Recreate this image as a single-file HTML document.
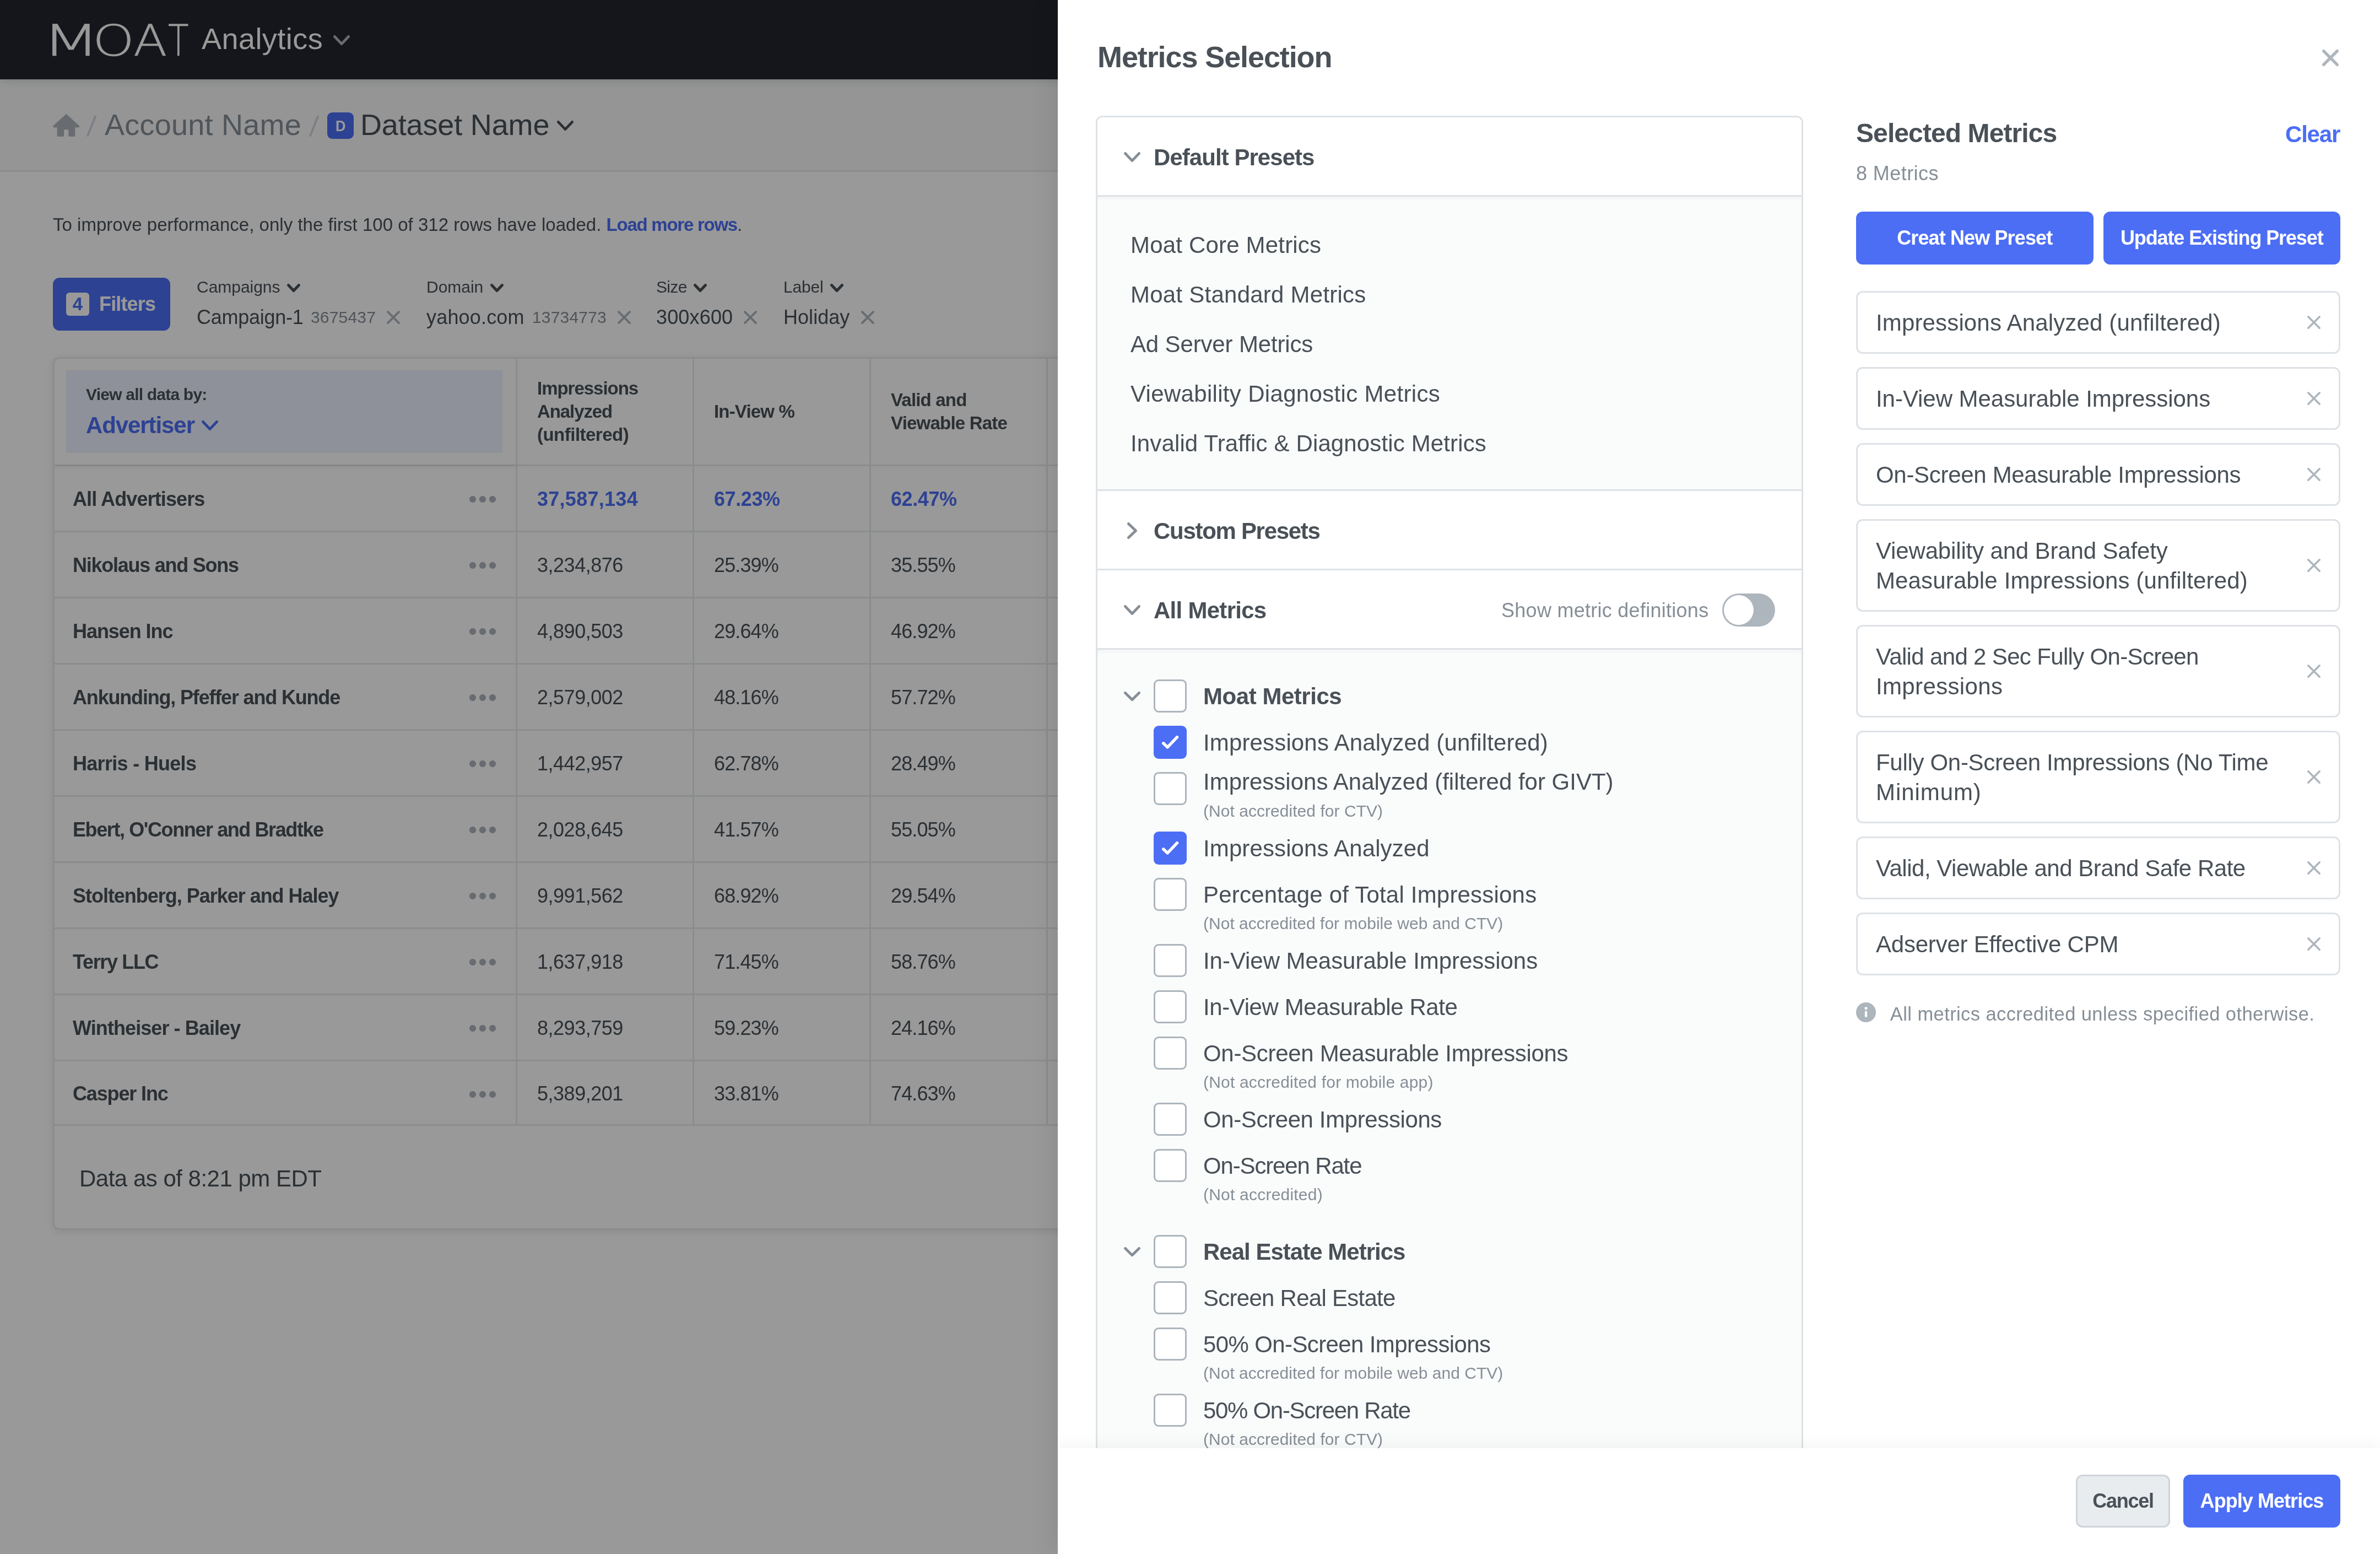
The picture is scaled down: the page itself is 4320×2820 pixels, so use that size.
<!DOCTYPE html>
<html lang="en">
<head>
<meta charset="utf-8">
<title>Moat Analytics – Metrics Selection</title>
<style>
*{box-sizing:border-box;margin:0;padding:0}
html,body{width:4320px;height:2820px;overflow:hidden;background:#fff}
body{font-family:"Liberation Sans",Arial,sans-serif;color:#495057;-webkit-font-smoothing:antialiased}
.app{position:relative;width:1440px;height:940px;overflow:hidden;zoom:3;background:#fff;will-change:transform}
svg{display:block;overflow:visible}
b,.b{font-weight:700}
/* ---------- top bar ---------- */
.top{position:absolute;z-index:1;left:0;top:0;width:1440px;height:48px;background:#23252d;color:#fff;box-shadow:0 1px 5px rgba(0,0,0,.14)}
.logo{position:absolute;left:0;top:0;height:48px;line-height:48px;font-family:"DejaVu Sans","Liberation Sans",sans-serif;font-weight:200;font-size:26.2px;color:#fff}
.logo span{position:absolute;top:.67px;-webkit-text-stroke:.22px #fff;transform-origin:0 50%}
.prod{position:absolute;left:122px;top:0;height:48px;line-height:47px;font-size:18px;color:#fff}
.top .chev{position:absolute;left:201.8px;top:21.2px}
/* ---------- breadcrumb ---------- */
.crumbs{position:absolute;left:0;top:48px;width:1440px;height:56px;background:#f8f9fa;border-bottom:1px solid #e6e9ec;font-size:18px;line-height:55px;color:#868e96;white-space:nowrap}
.crumbs .home{position:absolute;left:31.5px;top:20.95px}
.crumbs .sl{position:absolute;top:1px;color:#ced4da;font-size:17px;transform:skewX(-7deg)}
.crumbs .acc{position:absolute;left:63.3px;top:0}
.crumbs .dbadge{position:absolute;left:198px;top:20px;width:16px;height:16px;border-radius:3px;background:#4c6ef5;color:#fff;font-size:9.5px;font-weight:700;line-height:16px;text-align:center}
.crumbs .dbadge span{display:inline-block;transform:scaleX(.9)}
.crumbs .ds{position:absolute;left:218px;top:0;color:#495057}
.crumbs .chev{position:absolute;left:337px;top:25px}
/* ---------- notice + filters ---------- */
.notice{position:absolute;left:32px;top:128px;font-size:11px;line-height:16px;white-space:nowrap;color:#495057}
.notice a{color:#4c6ef5;font-weight:700;text-decoration:none}
.fbtn{position:absolute;left:32px;top:168px;width:71px;height:32px;border-radius:4px;background:#4c6ef5;color:#fff;font-size:12px;font-weight:700;line-height:32px}
.fbtn i{position:absolute;left:8px;top:9px;width:14px;height:14px;border-radius:2px;background:#fff;color:#4c6ef5;font-style:normal;font-size:11px;line-height:14px;text-align:center}
.fbtn>span{position:absolute;left:28px;top:0}
.flt{position:absolute;top:166px;height:36px;white-space:nowrap}
.flt .lab{position:absolute;left:0;top:0.5px;font-size:10px;line-height:14px;color:#495057}
.flt .lab svg{position:absolute;top:5px}
.flt .val{position:absolute;left:0;top:17px;font-size:12px;line-height:18px;color:#495057}
.flt .id{position:absolute;top:18px;font-size:10px;line-height:16px;color:#868e96}
.flt .x{position:absolute;top:22px}
/* ---------- table ---------- */
.tbl{z-index:0;position:absolute;left:32px;top:216px;width:1376px;height:528px;border:1px solid #e6e9ec;border-radius:4px;background:#fff;box-shadow:0 1px 5px rgba(0,0,0,.09);overflow:hidden}
.tr{display:flex;height:40px;border-bottom:1px solid #e6e9ec}
.tr.h{height:65px}
.tr.last{height:39px}
.tr.last .td{line-height:39px}
.td{flex:0 0 107px;border-right:1px solid #e6e9ec;padding-left:12px;font-size:12px;line-height:40px;white-space:nowrap;color:#495057}
.td.f{flex:0 0 280px;padding-left:11px;font-weight:700;position:relative}
.tr.h .td.f{z-index:1;box-shadow:0 2px 3px rgba(0,0,0,.05)}
.tr.h .td{font-size:11px;font-weight:700;line-height:14px;display:flex;align-items:center;white-space:normal}
.tr.tot .td{color:#4c6ef5;font-weight:700}
.tr.tot .td.f{color:#495057}
.dots{position:absolute;left:251px;top:18px;width:16px;height:4px;background:radial-gradient(circle at 2px 2px,#adb5bd 1.9px,transparent 2.1px) 0 0/6px 4px repeat-x}
.vsel{position:absolute;left:7px;top:7px;width:264px;height:50px;background:#edf2ff}
.vsel .l1{position:absolute;left:12px;top:7.5px;font-size:10px;line-height:14px;font-weight:700;color:#495057;white-space:nowrap}
.vsel .l2{position:absolute;left:12px;top:23.4px;font-size:14px;line-height:20px;font-weight:700;color:#4c6ef5;white-space:nowrap}
.vsel svg{position:absolute;left:82px;top:30.3px}
.tfoot{height:62px;padding-left:15px;font-size:14px;line-height:64px;color:#495057}
/* ---------- scrim ---------- */
.scrim{z-index:5;position:absolute;left:0;top:0;width:1440px;height:940px;background:rgba(0,0,0,.4)}
/* ---------- panel ---------- */
.panel{z-index:6;position:absolute;left:640px;top:0;width:800px;height:940px;background:#fff;box-shadow:-4px 0 14px rgba(0,0,0,.08);overflow:hidden}
.ptitle{position:absolute;left:24px;top:21.4px;font-size:18px;line-height:26px;font-weight:700;color:#495057;white-space:nowrap}
.pclose{position:absolute;left:765px;top:30px}
.card{position:absolute;left:24px;top:71px;width:426px;height:900px;background:#fff;border-radius:3px;box-shadow:0 0 0 1px #dee2e6}
.sec{position:relative;height:48px;border-bottom:1px solid #dee2e6;font-size:14px;font-weight:700;line-height:47px;color:#495057;background:#fff;white-space:nowrap}
.sec:first-child{border-radius:3px 3px 0 0}
.sec .t{position:absolute;left:34px;top:.8px}
.sec svg{position:absolute;left:16px;top:21px}
.presets{box-shadow:inset 0 2px 3px -1px rgba(0,0,0,.035);height:178px;padding:14.4px 0 0 20px;background:#fafbfb;border-bottom:1px solid #dee2e6;font-size:14px;line-height:30px;color:#495057;white-space:nowrap}
.smd{position:absolute;right:56.2px;top:.6px;font-size:12px;font-weight:400;color:#868e96}
.tog{position:absolute;left:378px;top:14px;width:32px;height:20px;border-radius:10px;background:#adb5bd}
.tog::after{content:"";position:absolute;left:1px;top:1px;width:18px;height:18px;border-radius:50%;background:#fff}
.mlist{position:relative;height:520px;background:#fafbfb;box-shadow:inset 0 2px 3px -1px rgba(0,0,0,.035)}
.mi{position:absolute;left:0;width:426px;height:20px;white-space:nowrap}
.mi .cb{position:absolute;left:34px;top:0;width:20px;height:20px;border:1px solid #adb5bd;border-radius:3px;background:#fff}
.mi .cb.on{border:0;background:#4c6ef5}
.mi .cb.on svg{position:absolute;left:5px;top:6px}
.mi .n{position:absolute;left:64px;top:.4px;font-size:14px;line-height:20px;color:#495057}
.mi .s{position:absolute;left:64px;top:20.5px;font-size:10px;line-height:14px;color:#868e96}
.mi.g .n{font-weight:700}
.mi .gc{position:absolute;left:16px;top:7.4px}
/* right column */
.rc{position:absolute;left:483px;top:0;width:293px}
.rtitle{position:absolute;left:0;top:68.7px;font-size:16px;line-height:24px;font-weight:700;color:#495057;white-space:nowrap}
.rclear{position:absolute;right:.3px;top:70.2px;font-size:14px;line-height:22px;font-weight:700;color:#4c6ef5}
.rcount{position:absolute;left:0;top:96px;font-size:12px;line-height:18px;color:#868e96}
.pbtn{position:absolute;top:128px;height:32px;border-radius:4px;background:#4c6ef5;color:#fff;font-size:12px;font-weight:700;line-height:32px;text-align:center;white-space:nowrap}
.sm{position:absolute;left:0;width:293px;border:1px solid #dee2e6;border-radius:4px;background:#fff;font-size:14px;line-height:18px;color:#495057;padding:9.4px 0 0 11px;white-space:nowrap}
.sm svg{position:absolute;left:272px;top:50%;margin-top:-4px}
.rnote{position:absolute;left:0;top:604px;width:293px;height:16px;font-size:11.5px;line-height:16px;color:#868e96;white-space:nowrap}
.rnote svg{position:absolute;left:0;top:2.4px}
.rnote>span{position:absolute;left:20.6px;top:1.4px}
/* footer */
.pfoot{position:absolute;left:0;top:876px;width:800px;height:64px;background:#fff;box-shadow:0 -3px 8px rgba(0,0,0,.04)}
.btn{position:absolute;top:16px;height:32px;border-radius:4px;font-size:12px;font-weight:700;line-height:32px;text-align:center;white-space:nowrap}
.btn.c{left:616px;width:57px;background:#e9ecef;border:1px solid #ced4da;color:#495057;line-height:30px}
.btn.a{left:681px;width:95px;background:#4c6ef5;color:#fff}
</style>
</head>
<body>
<div class="app">
<header class="top"><span class="logo"><span style="left:25.3px;transform:scaleX(1.56)">M</span><span style="left:55.9px;transform:scaleX(1.23)">O</span><span style="left:80.6px;transform:scaleX(1.144)">A</span><span style="left:101.6px;transform:scaleX(.78)">T</span></span><span class="prod"><span style="letter-spacing:0.148px">Analytics</span></span><svg class="chev" width="10" height="6" viewBox="0 0 10 6" fill="none" stroke="#adb5bd" stroke-width="1.6" stroke-linecap="round" stroke-linejoin="round"><path d="M0.80 0.80 L5.0 5.20 L9.20 0.80"/></svg></header>
<nav class="crumbs"><svg class="home" width="16.8" height="13.6" viewBox="2 3.2 20 17" preserveAspectRatio="none"><path fill="#adb5bd" stroke="#adb5bd" stroke-width=".8" stroke-linejoin="round" d="M12 3.6L21.1 12.3V12.9H18V19.8H14.06V14.56H10V19.8H5.8V12.9H2.9V12.3Z"/></svg><span class="sl" style="left:53px">/</span><span class="acc"><span style="letter-spacing:0.081px">Account Name</span></span><span class="sl" style="left:187.8px">/</span><span class="dbadge"><span>D</span></span><span class="ds"><span style="letter-spacing:-0.052px">Dataset Name</span></span><svg class="chev" width="10" height="6" viewBox="0 0 10 6" fill="none" stroke="#495057" stroke-width="1.55" stroke-linecap="round" stroke-linejoin="round"><path d="M0.78 0.78 L5.0 5.22 L9.22 0.78"/></svg></nav>
<p class="notice"><span style="letter-spacing:0.006px">To improve performance, only the first 100 of 312 rows have loaded. </span><a><span style="letter-spacing:-0.417px">Load more rows</span></a>.</p>
<div class="fbtn"><i>4</i><span><span style="letter-spacing:-0.281px">Filters</span></span></div>
<div class="flt" style="left:119px"><span class="lab"><span style="letter-spacing:-0.009px">Campaigns</span><svg class="c" style="left:54.8px" width="8" height="5" viewBox="0 0 8 5" fill="none" stroke="#495057" stroke-width="1.7" stroke-linecap="round" stroke-linejoin="round"><path d="M0.85 0.85 L4.0 4.15 L7.15 0.85"/></svg></span><span class="val"><span style="letter-spacing:-0.089px">Campaign-1</span></span><span class="id" style="left:69px"><span style="letter-spacing:0.058px">3675437</span></span><svg class="x" style="left:115px" width="8" height="8" viewBox="0 0 8 8" fill="none" stroke="#adb5bd" stroke-width="1.3" stroke-linecap="round"><path d="M0.65 0.65 L7.35 7.35 M7.35 0.65 L0.65 7.35"/></svg></div><div class="flt" style="left:258px"><span class="lab"><span style="letter-spacing:-0.005px">Domain</span><svg class="c" style="left:38.699999999999996px" width="8" height="5" viewBox="0 0 8 5" fill="none" stroke="#495057" stroke-width="1.7" stroke-linecap="round" stroke-linejoin="round"><path d="M0.85 0.85 L4.0 4.15 L7.15 0.85"/></svg></span><span class="val"><span style="letter-spacing:0.059px">yahoo.com</span></span><span class="id" style="left:64px"><span style="letter-spacing:0.059px">13734773</span></span><svg class="x" style="left:115.5px" width="8" height="8" viewBox="0 0 8 8" fill="none" stroke="#adb5bd" stroke-width="1.3" stroke-linecap="round"><path d="M0.65 0.65 L7.35 7.35 M7.35 0.65 L0.65 7.35"/></svg></div><div class="flt" style="left:397px"><span class="lab"><span style="letter-spacing:-0.223px">Size</span><svg class="c" style="left:22.6px" width="8" height="5" viewBox="0 0 8 5" fill="none" stroke="#495057" stroke-width="1.7" stroke-linecap="round" stroke-linejoin="round"><path d="M0.85 0.85 L4.0 4.15 L7.15 0.85"/></svg></span><span class="val"><span style="letter-spacing:0.054px">300x600</span></span><svg class="x" style="left:53px" width="8" height="8" viewBox="0 0 8 8" fill="none" stroke="#adb5bd" stroke-width="1.3" stroke-linecap="round"><path d="M0.65 0.65 L7.35 7.35 M7.35 0.65 L0.65 7.35"/></svg></div><div class="flt" style="left:474px"><span class="lab"><span style="letter-spacing:-0.056px">Label</span><svg class="c" style="left:28.3px" width="8" height="5" viewBox="0 0 8 5" fill="none" stroke="#495057" stroke-width="1.7" stroke-linecap="round" stroke-linejoin="round"><path d="M0.85 0.85 L4.0 4.15 L7.15 0.85"/></svg></span><span class="val"><span style="letter-spacing:0.013px">Holiday</span></span><svg class="x" style="left:47px" width="8" height="8" viewBox="0 0 8 8" fill="none" stroke="#adb5bd" stroke-width="1.3" stroke-linecap="round"><path d="M0.65 0.65 L7.35 7.35 M7.35 0.65 L0.65 7.35"/></svg></div>
<section class="tbl">
<div class="tr h"><div class="td f"><div class="vsel"><span class="l1"><span style="letter-spacing:-0.262px">View all data by:</span></span><span class="l2"><span style="letter-spacing:-0.362px">Advertiser</span></span><svg class="c" width="10" height="6" viewBox="0 0 10 6" fill="none" stroke="#4c6ef5" stroke-width="1.6" stroke-linecap="round" stroke-linejoin="round"><path d="M0.80 0.80 L5.0 5.20 L9.20 0.80"/></svg></div></div><div class="td"><span><span style="letter-spacing:-0.342px">Impressions</span><br><span style="letter-spacing:-0.365px">Analyzed</span><br><span style="letter-spacing:-0.172px">(unfiltered)</span></span></div><div class="td"><span><span style="letter-spacing:-0.273px">In-View %</span></span></div><div class="td"><span><span style="letter-spacing:-0.274px">Valid and</span><br><span style="letter-spacing:-0.262px">Viewable Rate</span></span></div><div class="td"></div></div>
<div class="tr tot"><div class="td f"><span style="letter-spacing:-0.296px">All Advertisers</span><span class="dots"></span></div><div class="td"><span style="letter-spacing:0.092px">37,587,134</span></div><div class="td"><span style="letter-spacing:-0.135px">67.23%</span></div><div class="td"><span style="letter-spacing:-0.135px">62.47%</span></div><div class="td"></div></div>
<div class="tr"><div class="td f"><span style="letter-spacing:-0.419px">Nikolaus and Sons</span><span class="dots"></span></div><div class="td"><span style="letter-spacing:-0.161px">3,234,876</span></div><div class="td"><span style="letter-spacing:-0.294px">25.39%</span></div><div class="td"><span style="letter-spacing:-0.294px">35.55%</span></div><div class="td"></div></div>
<div class="tr"><div class="td f"><span style="letter-spacing:-0.356px">Hansen Inc</span><span class="dots"></span></div><div class="td"><span style="letter-spacing:-0.161px">4,890,503</span></div><div class="td"><span style="letter-spacing:-0.294px">29.64%</span></div><div class="td"><span style="letter-spacing:-0.294px">46.92%</span></div><div class="td"></div></div>
<div class="tr"><div class="td f"><span style="letter-spacing:-0.393px">Ankunding, Pfeffer and Kunde</span><span class="dots"></span></div><div class="td"><span style="letter-spacing:-0.161px">2,579,002</span></div><div class="td"><span style="letter-spacing:-0.294px">48.16%</span></div><div class="td"><span style="letter-spacing:-0.294px">57.72%</span></div><div class="td"></div></div>
<div class="tr"><div class="td f"><span style="letter-spacing:-0.235px">Harris - Huels</span><span class="dots"></span></div><div class="td"><span style="letter-spacing:-0.161px">1,442,957</span></div><div class="td"><span style="letter-spacing:-0.294px">62.78%</span></div><div class="td"><span style="letter-spacing:-0.294px">28.49%</span></div><div class="td"></div></div>
<div class="tr"><div class="td f"><span style="letter-spacing:-0.468px">Ebert, O'Conner and Bradtke</span><span class="dots"></span></div><div class="td"><span style="letter-spacing:-0.161px">2,028,645</span></div><div class="td"><span style="letter-spacing:-0.294px">41.57%</span></div><div class="td"><span style="letter-spacing:-0.294px">55.05%</span></div><div class="td"></div></div>
<div class="tr"><div class="td f"><span style="letter-spacing:-0.341px">Stoltenberg, Parker and Haley</span><span class="dots"></span></div><div class="td"><span style="letter-spacing:-0.161px">9,991,562</span></div><div class="td"><span style="letter-spacing:-0.294px">68.92%</span></div><div class="td"><span style="letter-spacing:-0.294px">29.54%</span></div><div class="td"></div></div>
<div class="tr"><div class="td f"><span style="letter-spacing:-0.448px">Terry LLC</span><span class="dots"></span></div><div class="td"><span style="letter-spacing:-0.161px">1,637,918</span></div><div class="td"><span style="letter-spacing:-0.294px">71.45%</span></div><div class="td"><span style="letter-spacing:-0.294px">58.76%</span></div><div class="td"></div></div>
<div class="tr"><div class="td f"><span style="letter-spacing:-0.306px">Wintheiser - Bailey</span><span class="dots"></span></div><div class="td"><span style="letter-spacing:-0.161px">8,293,759</span></div><div class="td"><span style="letter-spacing:-0.294px">59.23%</span></div><div class="td"><span style="letter-spacing:-0.294px">24.16%</span></div><div class="td"></div></div>
<div class="tr last"><div class="td f"><span style="letter-spacing:-0.381px">Casper Inc</span><span class="dots"></span></div><div class="td"><span style="letter-spacing:-0.161px">5,389,201</span></div><div class="td"><span style="letter-spacing:-0.294px">33.81%</span></div><div class="td"><span style="letter-spacing:-0.294px">74.63%</span></div><div class="td"></div></div>
<div class="tfoot"><span style="letter-spacing:-0.167px">Data as of 8:21 pm EDT</span></div>
</section>
<div class="scrim"></div>
<aside class="panel">
<h1 class="ptitle"><span style="letter-spacing:-0.369px">Metrics Selection</span></h1>
<svg class="pclose" width="10" height="10" viewBox="0 0 10 10" fill="none" stroke="#adb5bd" stroke-width="1.8" stroke-linecap="round"><path d="M0.90 0.90 L9.10 9.10 M9.10 0.90 L0.90 9.10"/></svg>
<section class="card">
<div class="sec"><svg class="c" width="10" height="6" viewBox="0 0 10 6" fill="none" stroke="#868e96" stroke-width="1.6" stroke-linecap="round" stroke-linejoin="round"><path d="M0.80 0.80 L5.0 5.20 L9.20 0.80"/></svg><span class="t"><span style="letter-spacing:-0.317px">Default Presets</span></span></div>
<div class="presets"><span style="letter-spacing:0.062px">Moat Core Metrics</span><br><span style="letter-spacing:0.081px">Moat Standard Metrics</span><br><span style="letter-spacing:-0.051px">Ad Server Metrics</span><br><span style="letter-spacing:0.107px">Viewability Diagnostic Metrics</span><br><span style="letter-spacing:0.045px">Invalid Traffic &amp; Diagnostic Metrics</span></div>
<div class="sec"><svg width="6" height="10" viewBox="0 0 6 10" fill="none" stroke="#868e96" stroke-width="1.6" stroke-linecap="round" stroke-linejoin="round" style="left:18px;top:19px"><path d="M0.8 0.8 L5.2 5 L0.8 9.2"/></svg><span class="t"><span style="letter-spacing:-0.433px">Custom Presets</span></span></div>
<div class="sec"><svg class="c" width="10" height="6" viewBox="0 0 10 6" fill="none" stroke="#868e96" stroke-width="1.6" stroke-linecap="round" stroke-linejoin="round"><path d="M0.80 0.80 L5.0 5.20 L9.20 0.80"/></svg><span class="t"><span style="letter-spacing:-0.240px">All Metrics</span></span><span class="smd"><span style="letter-spacing:0.090px">Show metric definitions</span></span><span class="tog"></span></div>
<div class="mlist">
<div class="mi g" style="top:18px"><svg class="gc" width="10" height="5.7" viewBox="0 0 10 5.7" fill="none" stroke="#868e96" stroke-width="1.6" stroke-linecap="round" stroke-linejoin="round"><path d="M0.80 0.80 L5.0 4.90 L9.20 0.80"/></svg><span class="cb"></span><span class="n"><span style="letter-spacing:-0.152px">Moat Metrics</span></span></div>
<div class="mi" style="top:46px"><span class="cb on"><svg width="10" height="8" viewBox="0 0 10 8" fill="none" stroke="#fff" stroke-width="1.8" stroke-linecap="round" stroke-linejoin="round"><path d="M0.9 4.6 L3.4 7 L9.2 0.9"/></svg></span><span class="n"><span style="letter-spacing:0.049px">Impressions Analyzed (unfiltered)</span></span></div>
<div class="mi" style="top:74px"><span class="cb"></span><span class="n" style="top:-4px">Impressions Analyzed (filtered for GIVT)</span><span class="s" style="top:16.5px"><span style="letter-spacing:0.014px">(Not accredited for CTV)</span></span></div>
<div class="mi" style="top:110px"><span class="cb on"><svg width="10" height="8" viewBox="0 0 10 8" fill="none" stroke="#fff" stroke-width="1.8" stroke-linecap="round" stroke-linejoin="round"><path d="M0.9 4.6 L3.4 7 L9.2 0.9"/></svg></span><span class="n"><span style="letter-spacing:0.037px">Impressions Analyzed</span></span></div>
<div class="mi" style="top:138px"><span class="cb"></span><span class="n"><span style="letter-spacing:0.066px">Percentage of Total Impressions</span></span><span class="s"><span style="letter-spacing:0.006px">(Not accredited for mobile web and CTV)</span></span></div>
<div class="mi" style="top:178px"><span class="cb"></span><span class="n"><span style="letter-spacing:-0.015px">In-View Measurable Impressions</span></span></div>
<div class="mi" style="top:206px"><span class="cb"></span><span class="n"><span style="letter-spacing:-0.135px">In-View Measurable Rate</span></span></div>
<div class="mi" style="top:234px"><span class="cb"></span><span class="n"><span style="letter-spacing:-0.104px">On-Screen Measurable Impressions</span></span><span class="s"><span style="letter-spacing:0.062px">(Not accredited for mobile app)</span></span></div>
<div class="mi" style="top:274px"><span class="cb"></span><span class="n"><span style="letter-spacing:-0.130px">On-Screen Impressions</span></span></div>
<div class="mi" style="top:302px"><span class="cb"></span><span class="n"><span style="letter-spacing:-0.384px">On-Screen Rate</span></span><span class="s"><span style="letter-spacing:0.072px">(Not accredited)</span></span></div>
<div class="mi g" style="top:354px"><svg class="gc" width="10" height="5.7" viewBox="0 0 10 5.7" fill="none" stroke="#868e96" stroke-width="1.6" stroke-linecap="round" stroke-linejoin="round"><path d="M0.80 0.80 L5.0 4.90 L9.20 0.80"/></svg><span class="cb"></span><span class="n"><span style="letter-spacing:-0.329px">Real Estate Metrics</span></span></div>
<div class="mi" style="top:382px"><span class="cb"></span><span class="n"><span style="letter-spacing:-0.244px">Screen Real Estate</span></span></div>
<div class="mi" style="top:410px"><span class="cb"></span><span class="n"><span style="letter-spacing:-0.207px">50% On-Screen Impressions</span></span><span class="s"><span style="letter-spacing:0.006px">(Not accredited for mobile web and CTV)</span></span></div>
<div class="mi" style="top:450px"><span class="cb"></span><span class="n"><span style="letter-spacing:-0.435px">50% On-Screen Rate</span></span><span class="s"><span style="letter-spacing:0.014px">(Not accredited for CTV)</span></span></div>
</div>
</section>
<section class="rc">
<h2 class="rtitle"><span style="letter-spacing:-0.302px">Selected Metrics</span></h2>
<span class="rclear"><span style="letter-spacing:-0.397px">Clear</span></span>
<span class="rcount"><span style="letter-spacing:0.141px">8 Metrics</span></span>
<div class="pbtn" style="left:0;width:143.5px"><span style="letter-spacing:-0.293px">Creat New Preset</span></div>
<div class="pbtn" style="left:149.5px;width:143.5px"><span style="letter-spacing:-0.371px">Update Existing Preset</span></div>
<div class="sm" style="top:176px;height:38px"><span style="letter-spacing:0.049px">Impressions Analyzed (unfiltered)</span><svg class="x" width="8" height="8" viewBox="0 0 8 8" fill="none" stroke="#adb5bd" stroke-width="1.2" stroke-linecap="round"><path d="M0.60 0.60 L7.40 7.40 M7.40 0.60 L0.60 7.40"/></svg></div>
<div class="sm" style="top:222px;height:38px"><span style="letter-spacing:-0.015px">In-View Measurable Impressions</span><svg class="x" width="8" height="8" viewBox="0 0 8 8" fill="none" stroke="#adb5bd" stroke-width="1.2" stroke-linecap="round"><path d="M0.60 0.60 L7.40 7.40 M7.40 0.60 L0.60 7.40"/></svg></div>
<div class="sm" style="top:268px;height:38px"><span style="letter-spacing:-0.104px">On-Screen Measurable Impressions</span><svg class="x" width="8" height="8" viewBox="0 0 8 8" fill="none" stroke="#adb5bd" stroke-width="1.2" stroke-linecap="round"><path d="M0.60 0.60 L7.40 7.40 M7.40 0.60 L0.60 7.40"/></svg></div>
<div class="sm" style="top:314px;height:56px"><span style="letter-spacing:-0.052px">Viewability and Brand Safety</span><br><span style="letter-spacing:0.046px">Measurable Impressions (unfiltered)</span><svg class="x" width="8" height="8" viewBox="0 0 8 8" fill="none" stroke="#adb5bd" stroke-width="1.2" stroke-linecap="round"><path d="M0.60 0.60 L7.40 7.40 M7.40 0.60 L0.60 7.40"/></svg></div>
<div class="sm" style="top:378px;height:56px"><span style="letter-spacing:-0.220px">Valid and 2 Sec Fully On-Screen</span><br><span style="letter-spacing:0.119px">Impressions</span><svg class="x" width="8" height="8" viewBox="0 0 8 8" fill="none" stroke="#adb5bd" stroke-width="1.2" stroke-linecap="round"><path d="M0.60 0.60 L7.40 7.40 M7.40 0.60 L0.60 7.40"/></svg></div>
<div class="sm" style="top:442px;height:56px"><span style="letter-spacing:-0.104px">Fully On-Screen Impressions (No Time</span><br><span style="letter-spacing:0.309px">Minimum)</span><svg class="x" width="8" height="8" viewBox="0 0 8 8" fill="none" stroke="#adb5bd" stroke-width="1.2" stroke-linecap="round"><path d="M0.60 0.60 L7.40 7.40 M7.40 0.60 L0.60 7.40"/></svg></div>
<div class="sm" style="top:506px;height:38px"><span style="letter-spacing:-0.157px">Valid, Viewable and Brand Safe Rate</span><svg class="x" width="8" height="8" viewBox="0 0 8 8" fill="none" stroke="#adb5bd" stroke-width="1.2" stroke-linecap="round"><path d="M0.60 0.60 L7.40 7.40 M7.40 0.60 L0.60 7.40"/></svg></div>
<div class="sm" style="top:552px;height:38px"><span style="letter-spacing:-0.072px">Adserver Effective CPM</span><svg class="x" width="8" height="8" viewBox="0 0 8 8" fill="none" stroke="#adb5bd" stroke-width="1.2" stroke-linecap="round"><path d="M0.60 0.60 L7.40 7.40 M7.40 0.60 L0.60 7.40"/></svg></div>
<div class="rnote"><svg width="12" height="12" viewBox="0 0 12 12"><circle cx="6" cy="6" r="6" fill="#adb5bd"/><circle cx="6" cy="3.6" r=".85" fill="#fff"/><rect x="5.3" y="5.1" width="1.4" height="3.9" rx=".7" fill="#fff"/></svg><span><span style="letter-spacing:0.138px">All metrics accredited unless specified otherwise.</span></span></div>
</section>
<footer class="pfoot"><div class="btn c"><span style="letter-spacing:-0.406px">Cancel</span></div><div class="btn a"><span style="letter-spacing:-0.314px">Apply Metrics</span></div></footer>
</aside>
</div>
</body>
</html>
